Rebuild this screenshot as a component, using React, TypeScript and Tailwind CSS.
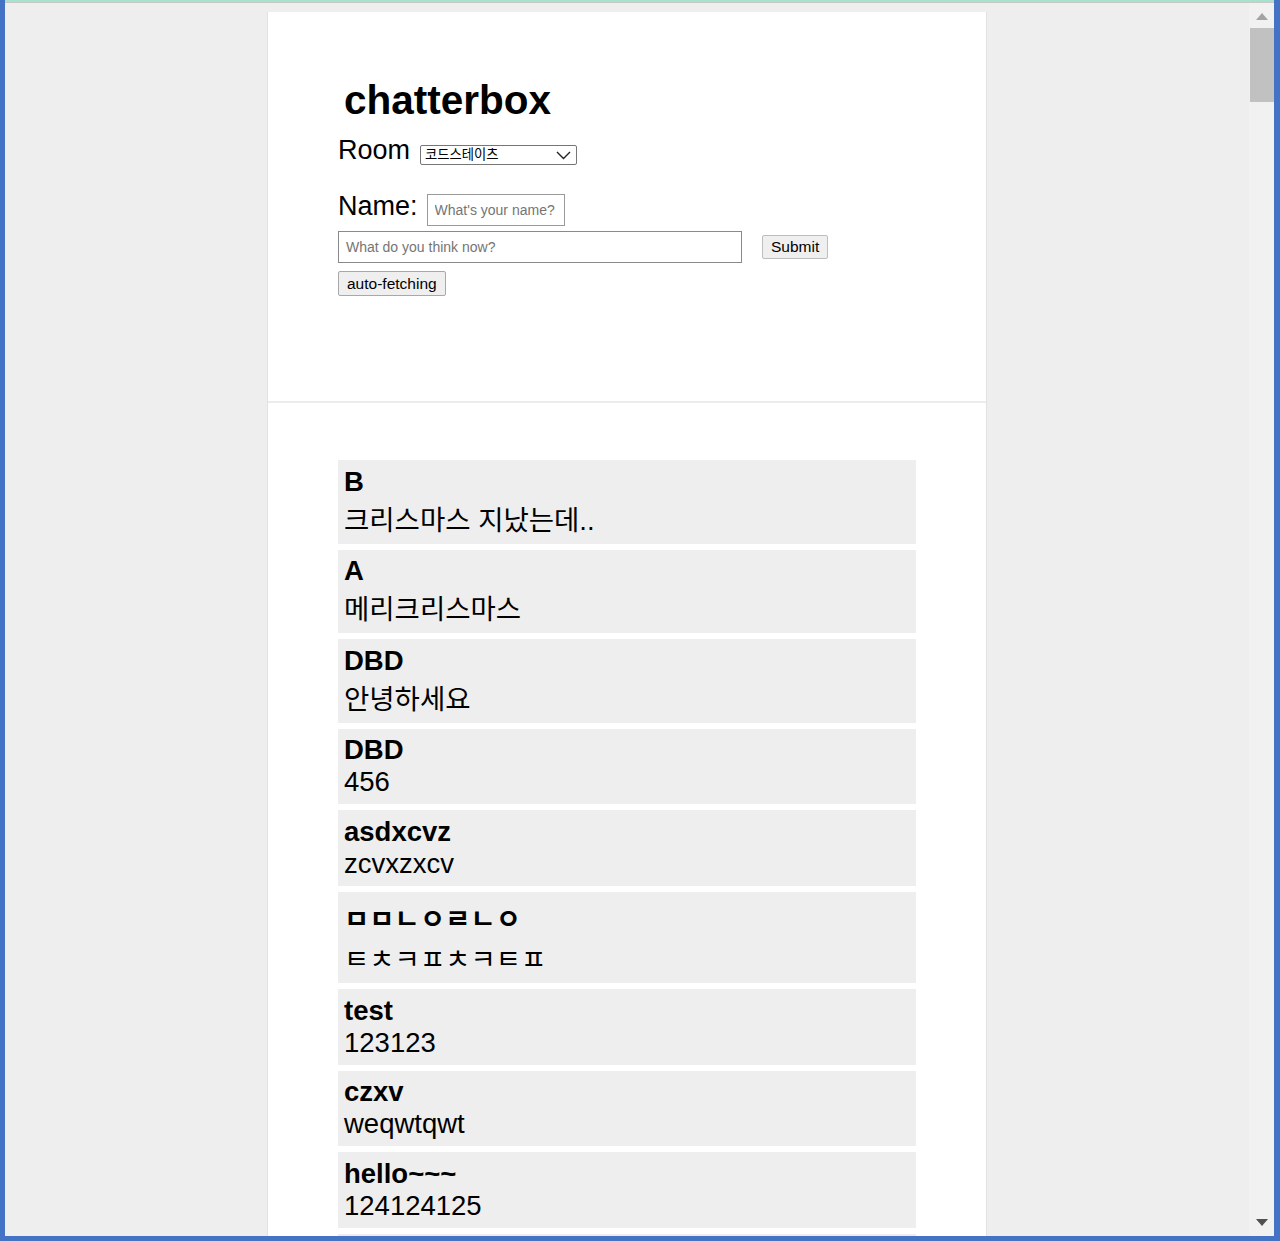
import React from 'react';

interface Message {
  username: string;
  text: string;
}

const messages: Message[] = [
  { username: 'B', text: '크리스마스 지났는데..' },
  { username: 'A', text: '메리크리스마스' },
  { username: 'DBD', text: '안녕하세요' },
  { username: 'DBD', text: '456' },
  { username: 'asdxcvz', text: 'zcvxzxcv' },
  { username: 'ㅁㅁㄴㅇㄹㄴㅇ', text: 'ㅌㅊㅋㅍㅊㅋㅌㅍ' },
  { username: 'test', text: '123123' },
  { username: 'czxv', text: 'weqwtqwt' },
  { username: 'hello~~~', text: '124124125' },
  { username: 'hi', text: '123' },
  { username: 'hi', text: 'hello' },
];

const Scrollbar: React.FC = () => (
  <div className="w-[25px] flex flex-col bg-[#f1f1f1]">
    <div className="h-[25px] flex items-center justify-center pt-[1px]">
      <svg width="12" height="7" viewBox="0 0 12 7">
        <polygon points="0,7 6,0 12,7" fill="#a3a3a3" />
      </svg>
    </div>
    <div className="flex-1 pl-[1px]">
      <div className="h-[74px] bg-[#c1c1c1]" />
    </div>
    <div className="h-[22px] flex items-start justify-center pt-[5px]">
      <svg width="12" height="7" viewBox="0 0 12 7">
        <polygon points="0,0 12,0 6,7" fill="#505050" />
      </svg>
    </div>
  </div>
);

const ChatMessage: React.FC<{ message: Message }> = ({ message }) => (
  <div className="bg-[#eeeeee] px-[6px] py-[5.75px] leading-[normal] text-[27.5px] text-black">
    <div className="font-bold">{message.username}</div>
    <div>{message.text}</div>
  </div>
);

export default function App() {
  return (
    <div className="w-[1280px] h-[1241px] overflow-hidden flex flex-col bg-[#4472c4] pl-[5px] pr-[6px] pb-[5px] font-['Liberation_Sans','Noto_Sans_CJK_KR',sans-serif]">
      {/* window top edge */}
      <div className="h-[2px] bg-[#a6e3cb]" />
      <div className="h-px bg-[#c8c8c8]" />

      <div className="flex flex-1 min-h-0">
        {/* page */}
        <div className="flex-1 min-w-0 overflow-hidden bg-[#eeeeee] pt-[9px]">
          <div className="w-[720px] mx-auto bg-white border-x border-[#e2e2e2]">

            {/* HEADER + FORM */}
            <div className="h-[391px] border-b-2 border-[#ececec] pt-[65px] px-[70px] leading-[normal] text-black">
              <h1 className="ml-[6px] text-[40.5px] font-bold leading-[normal]">chatterbox</h1>

              <div className="mt-[11px] flex items-baseline gap-[10px]">
                <span className="text-[27px]">Room</span>
                <div className="relative w-[157px]">
                  <select className="w-full h-[20px] appearance-none border border-[#767676] rounded-[2px] pl-[4px] text-[13.33px] bg-white">
                    <option>코드스테이츠</option>
                  </select>
                  <svg className="absolute right-[6px] top-[6px] pointer-events-none" width="15" height="9" viewBox="0 0 15 9">
                    <polyline points="1,1 7.5,7.5 14,1" fill="none" stroke="#222" strokeWidth="1.4" />
                  </svg>
                </div>
              </div>

              <div className="mt-[25px] flex items-baseline gap-[9px]">
                <span className="text-[27px]">Name:</span>
                <input
                  className="w-[138px] h-[32px] border border-[#9a9a9a] px-[7px] text-[14px] placeholder:text-[#757575]"
                  placeholder="What's your name?"
                />
              </div>

              <div className="mt-[5px] flex items-center gap-[20px]">
                <input
                  className="w-[404px] h-[32px] border border-[#8a8a8a] px-[7px] text-[14px] placeholder:text-[#757575]"
                  placeholder="What do you think now?"
                />
                <button className="h-[24px] px-[8px] bg-[#efefef] border border-[#bdbdbd] rounded-[2px] text-[15.5px]">
                  Submit
                </button>
              </div>

              <button className="mt-[8px] h-[25px] px-[8px] bg-[#efefef] border border-[#a8a8a8] rounded-[2px] text-[15.5px]">
                auto-fetching
              </button>
            </div>

            {/* MESSAGES */}
            <div className="pt-[57px] px-[70px] flex flex-col gap-[6px] pb-[40px]">
              {messages.map((m, i) => (
                <ChatMessage key={i} message={m} />
              ))}
            </div>
          </div>
        </div>

        <Scrollbar />
      </div>
    </div>
  );
}
